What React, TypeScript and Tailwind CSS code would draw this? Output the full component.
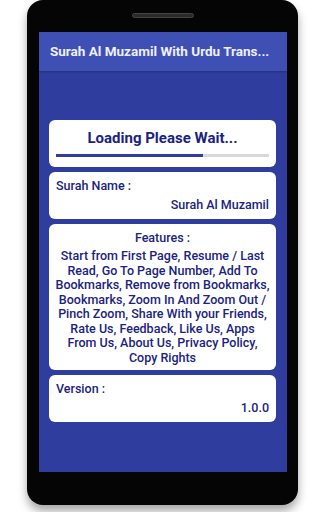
import React from 'react';

const navy = "text-[#1a237e]";

const features =
    "Start from First Page, Resume / Last Read, Go To Page Number, Add To Bookmarks, Remove from Bookmarks, Bookmarks, Zoom In And Zoom Out / Pinch Zoom, Share With your Friends, Rate Us, Feedback, Like Us, Apps From Us, About Us, Privacy Policy, Copy Rights";

const InfoCard: React.FC<{ label: string; value: string }> = ({ label, value }) => (
    <div className="bg-white rounded-[6px] px-[7px] pt-[6px] pb-[5px]">
        <div className={`text-[12.5px] font-medium leading-[16px] ${navy}`}>{label}</div>
        <div className={`text-[12.5px] font-medium leading-[18px] text-right mt-[2px] ${navy}`}>{value}</div>
    </div>
);

const App: React.FC = () => {
    return (
        <div className="w-[325px] h-[512px] bg-white overflow-hidden" style={{ fontFamily: "Roboto, 'Liberation Sans', sans-serif" }}>
            <div className="ml-[27px] w-[271px] h-[505px] rounded-[16px] bg-[#050505] pt-[13px] shadow-[0_6px_10px_rgba(0,0,0,0.35)]">
                <div className="mx-auto w-[62px] h-[5px] rounded-full bg-[#2a2a2a] border border-[#444]" />
                <div className="mt-[14px] ml-[12px] w-[248px] h-[440px] bg-[#2f3d9e] flex flex-col">
                    <div className="h-[39px] bg-[#3f50b5] flex items-center px-[11px] shadow-[0_1px_2px_rgba(0,0,0,0.25)]">
                        <span className="text-[13.5px] font-bold text-[#eef0fb] whitespace-nowrap">
                            Surah Al Muzamil With Urdu Trans...
                        </span>
                    </div>
                    <div className="flex flex-col gap-[5px] mt-[49px] ml-[10px] mr-[11px]">
                        <div className="bg-white rounded-[6px] pt-[7px] pb-[10px] px-[7px]">
                            <div className={`text-center text-[15px] font-bold leading-[22px] ${navy}`}>
                                Loading Please Wait...
                            </div>
                            <div className="mt-[5px] h-[3px] bg-[#d9d9dc]">
                                <div className="h-full bg-[#2f3d9e]" style={{ width: "69%" }} />
                            </div>
                        </div>
                        <InfoCard label="Surah Name :" value="Surah Al Muzamil" />
                        <div className="bg-white rounded-[6px] px-[6px] pt-[6px] pb-[5px]">
                            <div className={`text-center text-[12.5px] font-medium leading-[16px] ${navy}`}>Features :</div>
                            <div className={`text-center text-[12.5px] font-medium leading-[14.5px] mt-[3px] ${navy}`}>
                                {features}
                            </div>
                        </div>
                        <InfoCard label="Version :" value="1.0.0" />
                    </div>
                </div>
            </div>
        </div>
    );
};

export default App;
